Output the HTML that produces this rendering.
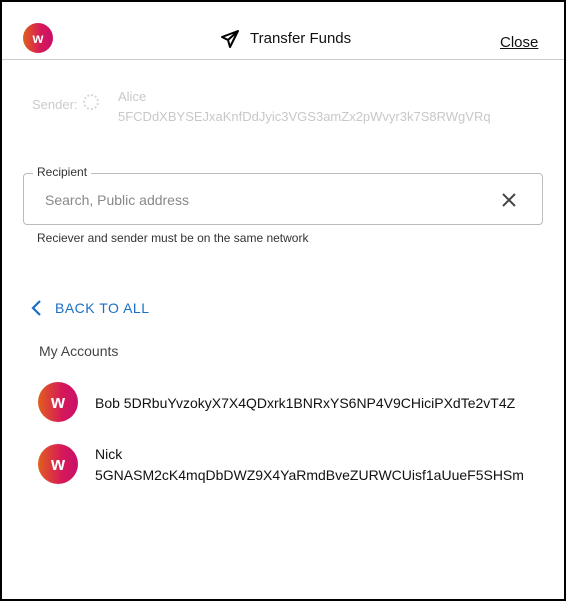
<!DOCTYPE html>
<html><head><style>
body{margin:0;width:566px;height:601px;overflow:hidden;background:#fff;font-family:"Liberation Sans",sans-serif;position:relative}
.frame{position:absolute;left:0;top:0;width:562px;height:597px;border:2px solid #000}
.abs{position:absolute;white-space:nowrap}
.logo{position:absolute;border-radius:50%;background:linear-gradient(90deg,#e0601c,#d6185a 60%,#c8106a);color:#fff;font-weight:bold;display:flex;align-items:center;justify-content:center}
</style></head><body>
<div class="frame"></div>
<div class="logo" style="left:23px;top:23px;width:30px;height:30px;font-size:14px">w</div>
<svg class="abs" style="left:220px;top:29px" width="20" height="20" viewBox="0 0 20 20"><path d="M18 2 L2 8 L8 11 L10 18 Z M8 11 L18 2" fill="none" stroke="#000" stroke-width="2" stroke-linejoin="round"/></svg>
<div class="abs" style="left:250px;top:30px;font-size:15px;color:#111">Transfer Funds</div>
<div class="abs" style="left:500px;top:34px;font-size:15px;color:#111;text-decoration:underline">Close</div>
<div class="abs" style="left:2px;top:59px;width:562px;height:1px;background:#ccc"></div>
<div class="abs" style="left:32px;top:97px;font-size:13px;color:#ccc">Sender:</div>
<div class="abs" style="left:83px;top:94px;width:16px;height:16px;border-radius:50%;border:2px dotted #d8d8d8;box-sizing:border-box"></div>
<div class="abs" style="left:118px;top:87px;font-size:13px;color:#c8c8c8;line-height:20px">Alice<br>5FCDdXBYSEJxaKnfDdJyic3VGS3amZx2pWvyr3k7S8RWgVRq</div>
<div class="abs" style="left:23px;top:173px;width:518px;height:50px;border:1px solid #bbb;border-radius:4px"></div>
<div class="abs" style="left:33px;top:165px;background:#fff;padding:0 4px;font-size:12px;color:#333">Recipient</div>
<div class="abs" style="left:45px;top:192px;font-size:14px;color:#888">Search, Public address</div>
<svg class="abs" style="left:501px;top:192px" width="16" height="16"><path d="M2 2L14 14M14 2L2 14" stroke="#444" stroke-width="2"/></svg>
<div class="abs" style="left:37px;top:231px;font-size:12px;color:#333">Reciever and sender must be on the same network</div>
<svg class="abs" style="left:30px;top:299px" width="14" height="18"><path d="M10 2L3 9L10 16" fill="none" stroke="#1a6fc4" stroke-width="2.2"/></svg>
<div class="abs" style="left:55px;top:300px;font-size:14px;color:#1a6fc4;letter-spacing:.5px">BACK TO ALL</div>
<div class="abs" style="left:39px;top:343px;font-size:14px;color:#444">My Accounts</div>
<div class="logo" style="left:38px;top:382px;width:40px;height:40px;font-size:18px">w</div>
<div class="abs" style="left:95px;top:395px;font-size:14px;color:#111">Bob 5DRbuYvzokyX7X4QDxrk1BNRxYS6NP4V9CHiciPXdTe2vT4Z</div>
<div class="logo" style="left:38px;top:444px;width:40px;height:40px;font-size:18px">w</div>
<div class="abs" style="left:95px;top:444px;font-size:14px;color:#111;line-height:21px">Nick<br>5GNASM2cK4mqDbDWZ9X4YaRmdBveZURWCUisf1aUueF5SHSm</div>
</body></html>
